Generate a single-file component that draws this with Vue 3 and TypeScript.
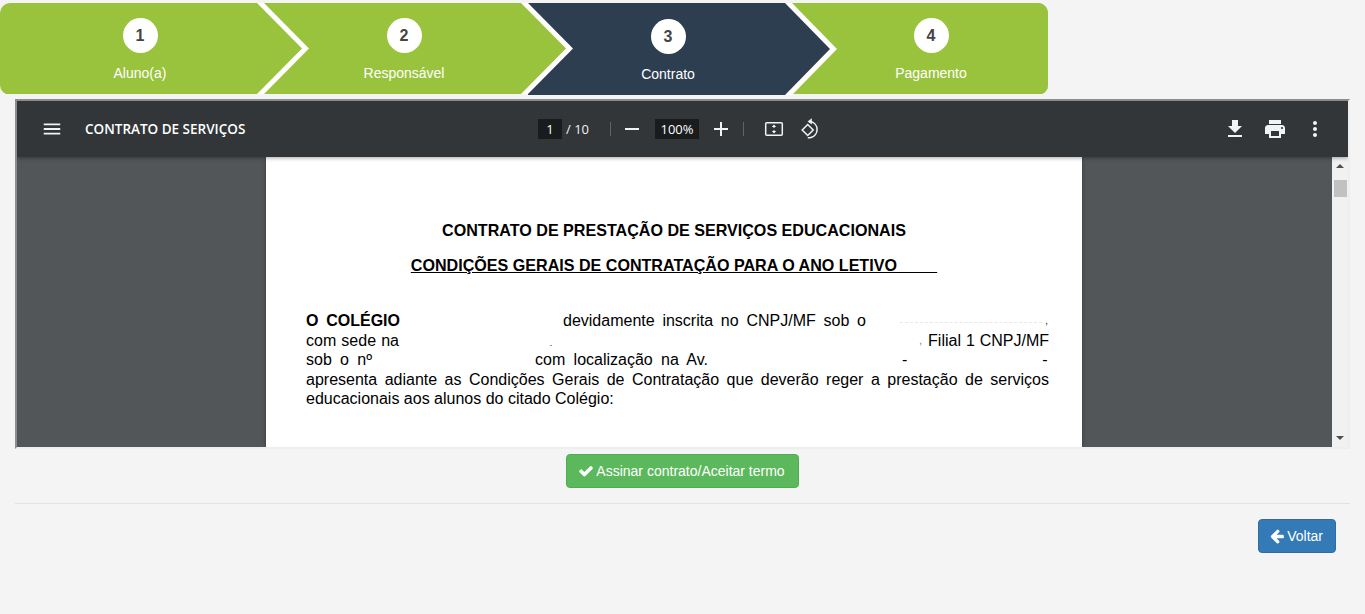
<script setup lang="ts">
interface Step {
  num: number
  label: string
  active?: boolean
}

const steps: Step[] = [
  { num: 1, label: 'Aluno(a)' },
  { num: 2, label: 'Responsável' },
  { num: 3, label: 'Contrato', active: true },
  { num: 4, label: 'Pagamento' },
]
</script>

<template>
  <div class="page">
    <div class="wizard">
      <div
        v-for="s in steps"
        :key="s.num"
        class="step"
        :class="{ active: s.active }"
      >
        <div class="step-body">
          <span class="step-num">{{ s.num }}</span>
          <span class="step-label">{{ s.label }}</span>
        </div>
      </div>
    </div>

    <div class="viewer">
      <div class="toolbar">
        <div class="tb-left">
          <svg class="ico menu" viewBox="0 0 24 24"><path d="M3 18h18v-2H3v2zm0-5h18v-2H3v2zm0-7v2h18V6H3z" /></svg>
          <span class="doc-title">CONTRATO DE SERVIÇOS</span>
        </div>
        <div class="tb-center">
          <span class="num-box page-box">1</span>
          <span class="page-total">/ 10</span>
          <span class="sep first-sep" />
          <svg class="ico zoom-ico" viewBox="0 0 24 24"><path d="M19 13H5v-2h14v2z" /></svg>
          <span class="num-box zoom-box">100%</span>
          <svg class="ico zoom-ico" viewBox="0 0 24 24"><path d="M19 13h-6v6h-2v-6H5v-2h6V5h2v6h6v2z" /></svg>
          <span class="sep" />
          <svg class="ico fit" viewBox="0 0 24 24">
            <rect class="line-ico" x="3.700" y="5.700" width="16.600" height="12.600" rx="1" />
            <path d="M12 7.500l2.200 2.400h-1.500v.8h-1.400v-.8H9.800zM12 16.500l-2.200-2.400h1.500v-.8h1.400v.8h1.500z" />
          </svg>
          <svg class="ico rotate" viewBox="0 0 24 24">
            <path class="line-ico" d="M4.200 13 9.700 7.500l5.500 5.500-5.500 5.500z" />
            <path class="line-ico" d="M12.800 4.600a8.200 8.200 0 0 1 .2 15.900 8.200 8.200 0 0 1-3.200.2" />
            <path d="M13.800 1.200v6.400L9.600 4.400z" />
          </svg>
        </div>
        <div class="tb-right">
          <span class="tb-btn"><svg class="ico" viewBox="0 0 24 24"><path d="M19 9h-4V3H9v6H5l7 7 7-7zM5 18v2h14v-2H5z" /></svg></span>
          <span class="tb-btn"><svg class="ico" viewBox="0 0 24 24"><path d="M19 8H5c-1.660 0-3 1.340-3 3v6h4v4h12v-4h4v-6c0-1.660-1.340-3-3-3zm-3 11H8v-5h8v5zm3-7c-.55 0-1-.45-1-1s.45-1 1-1 1 .45 1 1-.45 1-1 1zm-1-9H6v4h12V3z" /></svg></span>
          <span class="tb-btn"><svg class="ico" viewBox="0 0 24 24"><path d="M12 8c1.100 0 2-.9 2-2s-.9-2-2-2-2 .9-2 2 .9 2 2 2zm0 2c-1.100 0-2 .9-2 2s.9 2 2 2 2-.9 2-2-.9-2-2-2zm0 6c-1.100 0-2 .9-2 2s.9 2 2 2 2-.9 2-2-.9-2-2-2z" /></svg></span>
        </div>
      </div>

      <div class="viewer-main">
        <div class="canvas">
          <div class="sheet">
            <h1 class="doc-h1">CONTRATO DE PRESTAÇÃO DE SERVIÇOS EDUCACIONAIS</h1>
            <h2 class="doc-h2"><u>CONDIÇÕES GERAIS DE CONTRATAÇÃO PARA O ANO LETIVO&nbsp;&nbsp;&nbsp;&nbsp;&nbsp;&nbsp;&nbsp;&nbsp;&nbsp;</u></h2>

            <div class="para">
              <div class="line">
                <b class="seg w-colegio">O COLÉGIO</b>
                <span class="seg w-devid">devidamente inscrita no CNPJ/MF sob o</span>
                <span class="faint" />
                <span class="comma">,</span>
              </div>
              <div class="line">
                <span class="seg w-sede">com sede na</span>
                <span class="speck" />
                <span class="blue-comma">,</span>
                <span class="seg w-filial">Filial 1 CNPJ/MF</span>
              </div>
              <div class="line">
                <span class="seg w-sob">sob o nº</span>
                <span class="seg w-local">com localização na Av.</span>
                <span class="dash-a">-</span>
                <span class="dash-b">-</span>
              </div>
              <div class="line">
                <span class="seg w-full">apresenta adiante as Condições Gerais de Contratação que deverão reger a prestação de serviços</span>
              </div>
              <div class="line">educacionais aos alunos do citado Colégio:</div>
            </div>
          </div>
        </div>
        <div class="scrollbar">
          <span class="arrow up" />
          <span class="thumb" />
          <span class="arrow down" />
        </div>
      </div>
    </div>

    <div class="actions">
      <button class="btn btn-success" type="button">
        <svg class="fa" viewBox="0 0 1792 1792"><path d="M1671 566q0 40-28 68l-724 724-136 136q-28 28-68 28t-68-28l-136-136-362-362q-28-28-28-68t28-68l136-136q28-28 68-28t68 28l294 295 656-657q28-28 68-28t68 28l136 136q28 28 28 68z" /></svg>
        <span>Assinar contrato/Aceitar termo</span>
      </button>
    </div>

    <hr class="divider">

    <div class="footer">
      <button class="btn btn-primary" type="button">
        <svg class="fa" viewBox="0 0 1792 1792"><path d="M1664 896v128q0 53-32.500 90.500t-84.500 37.500h-704l293 294q38 36 38 90t-38 90l-75 76q-37 37-90 37-52 0-91-37l-651-652q-37-37-37-90 0-52 37-91l651-650q38-38 91-38 52 0 90 38l75 74q38 38 38 91t-38 91l-293 293h704q52 0 84.500 37.500t32.500 90.500z" /></svg>
        <span>Voltar</span>
      </button>
    </div>
  </div>
</template>

<style>
html,
body {
  background: #f4f4f4;
}
</style>

<style scoped>
.page {
  height: 614px;
  overflow: hidden;
  background: #f4f4f4;
  padding-top: 3px;
  box-sizing: border-box;
  font-family: "Liberation Sans", Arial, sans-serif;
}

/* wizard: cada etapa é uma seta branca com o miolo colorido por cima */
.wizard {
  display: flex;
  align-items: flex-start;
  width: 1048px;
  height: 92px;
  border-radius: 10px;
  overflow: hidden;
}

.step {
  position: relative;
  flex: 0 0 auto;
  width: 309px;
  height: 91px;
  margin-left: -45px;
  background: #fff;
  clip-path: polygon(0 0, 264px 0, 309px 45.5px, 264px 100%, 0 100%);
}

.step:first-child {
  margin-left: 0;
  z-index: 4;
}

.step:nth-child(2) {
  z-index: 3;
}

.step:nth-child(3) {
  z-index: 2;
  height: 92px;
  clip-path: polygon(0 0, 264px 0, 309px 46px, 264px 100%, 0 100%);
}

.step:nth-child(4) {
  z-index: 1;
}

.step::before {
  content: "";
  position: absolute;
  inset: 0;
  background: #9ac33d;
  clip-path: polygon(0 0, 257px 0, 302px 45.5px, 257px 100%, 0 100%);
}

.step.active::before {
  background: #2c3e50;
  clip-path: polygon(0 0, 257px 0, 302px 46px, 257px 100%, 0 100%);
}

.step:last-child {
  background: #9ac33d;
  clip-path: none;
}

.step:last-child::before {
  clip-path: none;
}

.step-body {
  position: relative;
  display: flex;
  flex-direction: column;
  align-items: center;
  width: 280px;
  padding-top: 15px;
}

.step:last-child .step-body {
  width: 278px;
}

.active .step-body {
  padding-top: 16px;
}

.step-num {
  width: 35px;
  height: 35px;
  border-radius: 50%;
  background: #fff;
  color: #444;
  font-size: 16px;
  font-weight: 700;
  line-height: 35px;
  text-align: center;
}

.step-label {
  margin-top: 12px;
  color: #fff;
  font-size: 14px;
  line-height: 16px;
}

/* viewer */
.viewer {
  width: 1335px;
  height: 350px;
  margin: 4px 0 0 15px;
  box-sizing: border-box;
  border-style: solid;
  border-width: 2px;
  border-color: #8c8c8c #eeeeee #eeeeee #8c8c8c;
  display: flex;
  flex-direction: column;
  overflow: hidden;
}

.toolbar {
  position: relative;
  z-index: 2;
  flex: 0 0 56px;
  display: flex;
  align-items: center;
  background: #323639;
  color: #f1f3f4;
  box-shadow: 0 1px 4px rgba(0, 0, 0, 0.35);
}

.ico {
  display: block;
  width: 24px;
  height: 24px;
  fill: #f1f3f4;
  flex: none;
}

.ico .line-ico {
  fill: none;
  stroke: #f1f3f4;
  stroke-width: 1.500;
}

.tb-left {
  flex: 0 0 521px;
  display: flex;
  align-items: center;
  padding-left: 23.500px;
  box-sizing: border-box;
}

.menu {
  width: 22px;
  height: 22px;
}

.doc-title {
  margin-left: 22.500px;
  font-family: "Open Sans", sans-serif;
  font-size: 13.500px;
  font-weight: 600;
  color: #fff;
}

.tb-center {
  display: flex;
  align-items: center;
  font-family: "Open Sans", sans-serif;
  font-size: 13px;
  color: #f1f3f4;
}

.num-box {
  height: 20px;
  line-height: 20px;
  background: #191b1c;
  text-align: center;
  color: #fff;
}

.page-box {
  width: 24px;
}

.page-total {
  margin-left: 4px;
  width: 24px;
}

.sep {
  width: 1px;
  height: 14px;
  margin-left: 10px;
  background: #5f6368;
}

.first-sep {
  margin-left: 20px;
}

.zoom-ico {
  margin-left: 9px;
}

.zoom-box {
  width: 44px;
  margin-left: 11px;
}

.zoom-box + .zoom-ico {
  margin-left: 10px;
}

.fit {
  margin-left: 18px;
}

.rotate {
  margin-left: 12px;
}

.tb-right {
  margin-left: auto;
  display: flex;
  padding-right: 13px;
}

.tb-btn {
  width: 40px;
  display: flex;
  justify-content: center;
}

.viewer-main {
  flex: 1;
  display: flex;
  min-height: 0;
}

.canvas {
  flex: 1;
  display: flex;
  justify-content: center;
  padding-right: 1px;
  background: #525659;
  overflow: hidden;
}

.sheet {
  width: 816px;
  padding: 63px 33px 0 40px;
  box-sizing: border-box;
  background: #fff;
  color: #000;
  font-size: 16px;
  box-shadow: 0 0 4px rgba(0, 0, 0, 0.3);
}

.doc-h1,
.doc-h2 {
  margin: 0 -33px 0 -40px;
  font-size: 16.100px;
  font-weight: 700;
  text-align: center;
  line-height: 20px;
}

.doc-h2 {
  margin-top: 15px;
}

.doc-h2 u {
  white-space: pre;
}

.para {
  margin-top: 36px;
  line-height: 19.600px;
}

.line {
  display: flex;
  height: 19.600px;
  white-space: nowrap;
}

.seg {
  display: block;
  white-space: normal;
  text-align: justify;
  text-align-last: justify;
  flex: none;
}

.w-colegio {
  width: 94px;
}

.w-devid {
  width: 303px;
  margin-left: 163px;
}

.faint {
  flex: none;
  width: 142px;
  height: 11px;
  margin-left: 34px;
  border-bottom: 1px dashed #e6e8ea;
}

.comma {
  margin-left: 3px;
  font-size: 11px;
  color: #333;
}

.w-sede {
  width: 93px;
}

.speck {
  flex: none;
  width: 2px;
  height: 1px;
  margin: 14px 0 0 151px;
  background: #999;
}

.blue-comma {
  margin-left: 367px;
  font-size: 11px;
  color: #4f8fd0;
}

.w-filial {
  width: 121px;
  margin-left: 6px;
}

.w-sob {
  width: 66px;
}

.w-local {
  width: 173px;
  margin-left: 163px;
}

.dash-a {
  margin-left: 194px;
}

.dash-b {
  margin-left: 135px;
}

.w-full {
  width: 743px;
}

.scrollbar {
  flex: 0 0 16px;
  background: #f1f1f1;
  display: flex;
  flex-direction: column;
  align-items: center;
  position: relative;
}

.thumb {
  width: 13px;
  height: 17px;
  margin-top: 12px;
  background: #c1c1c1;
}

.arrow {
  width: 0;
  height: 0;
  border-left: 4px solid transparent;
  border-right: 4px solid transparent;
}

.arrow.up {
  margin-top: 7px;
  border-bottom: 4px solid #505050;
}

.arrow.down {
  margin-top: auto;
  margin-bottom: 7px;
  border-top: 4px solid #505050;
}

/* botões estilo bootstrap */
.btn {
  display: inline-flex;
  align-items: center;
  height: 34px;
  padding: 0 12px;
  box-sizing: border-box;
  border: 1px solid transparent;
  border-radius: 4px;
  font-family: "Liberation Sans", Arial, sans-serif;
  font-size: 14px;
  color: #fff;
}

.btn-success {
  padding-right: 13px;
  background: #5cb85c;
  border-color: #4cae4c;
}

.btn-primary {
  padding-left: 11px;
  background: #337ab7;
  border-color: #2e6da4;
}

.fa {
  width: 16px;
  height: 16px;
  margin: 0 2px 0 -1px;
  fill: #fff;
  flex: none;
}

.actions {
  margin: 5px 15px 0;
  width: 1335px;
  display: flex;
  justify-content: center;
}

.divider {
  width: 1335px;
  margin: 15px 0 15px 15px;
  border: 0;
  border-top: 1px solid #e3e3e3;
}

.footer {
  display: flex;
  justify-content: flex-end;
  width: 1336px;
}
</style>
